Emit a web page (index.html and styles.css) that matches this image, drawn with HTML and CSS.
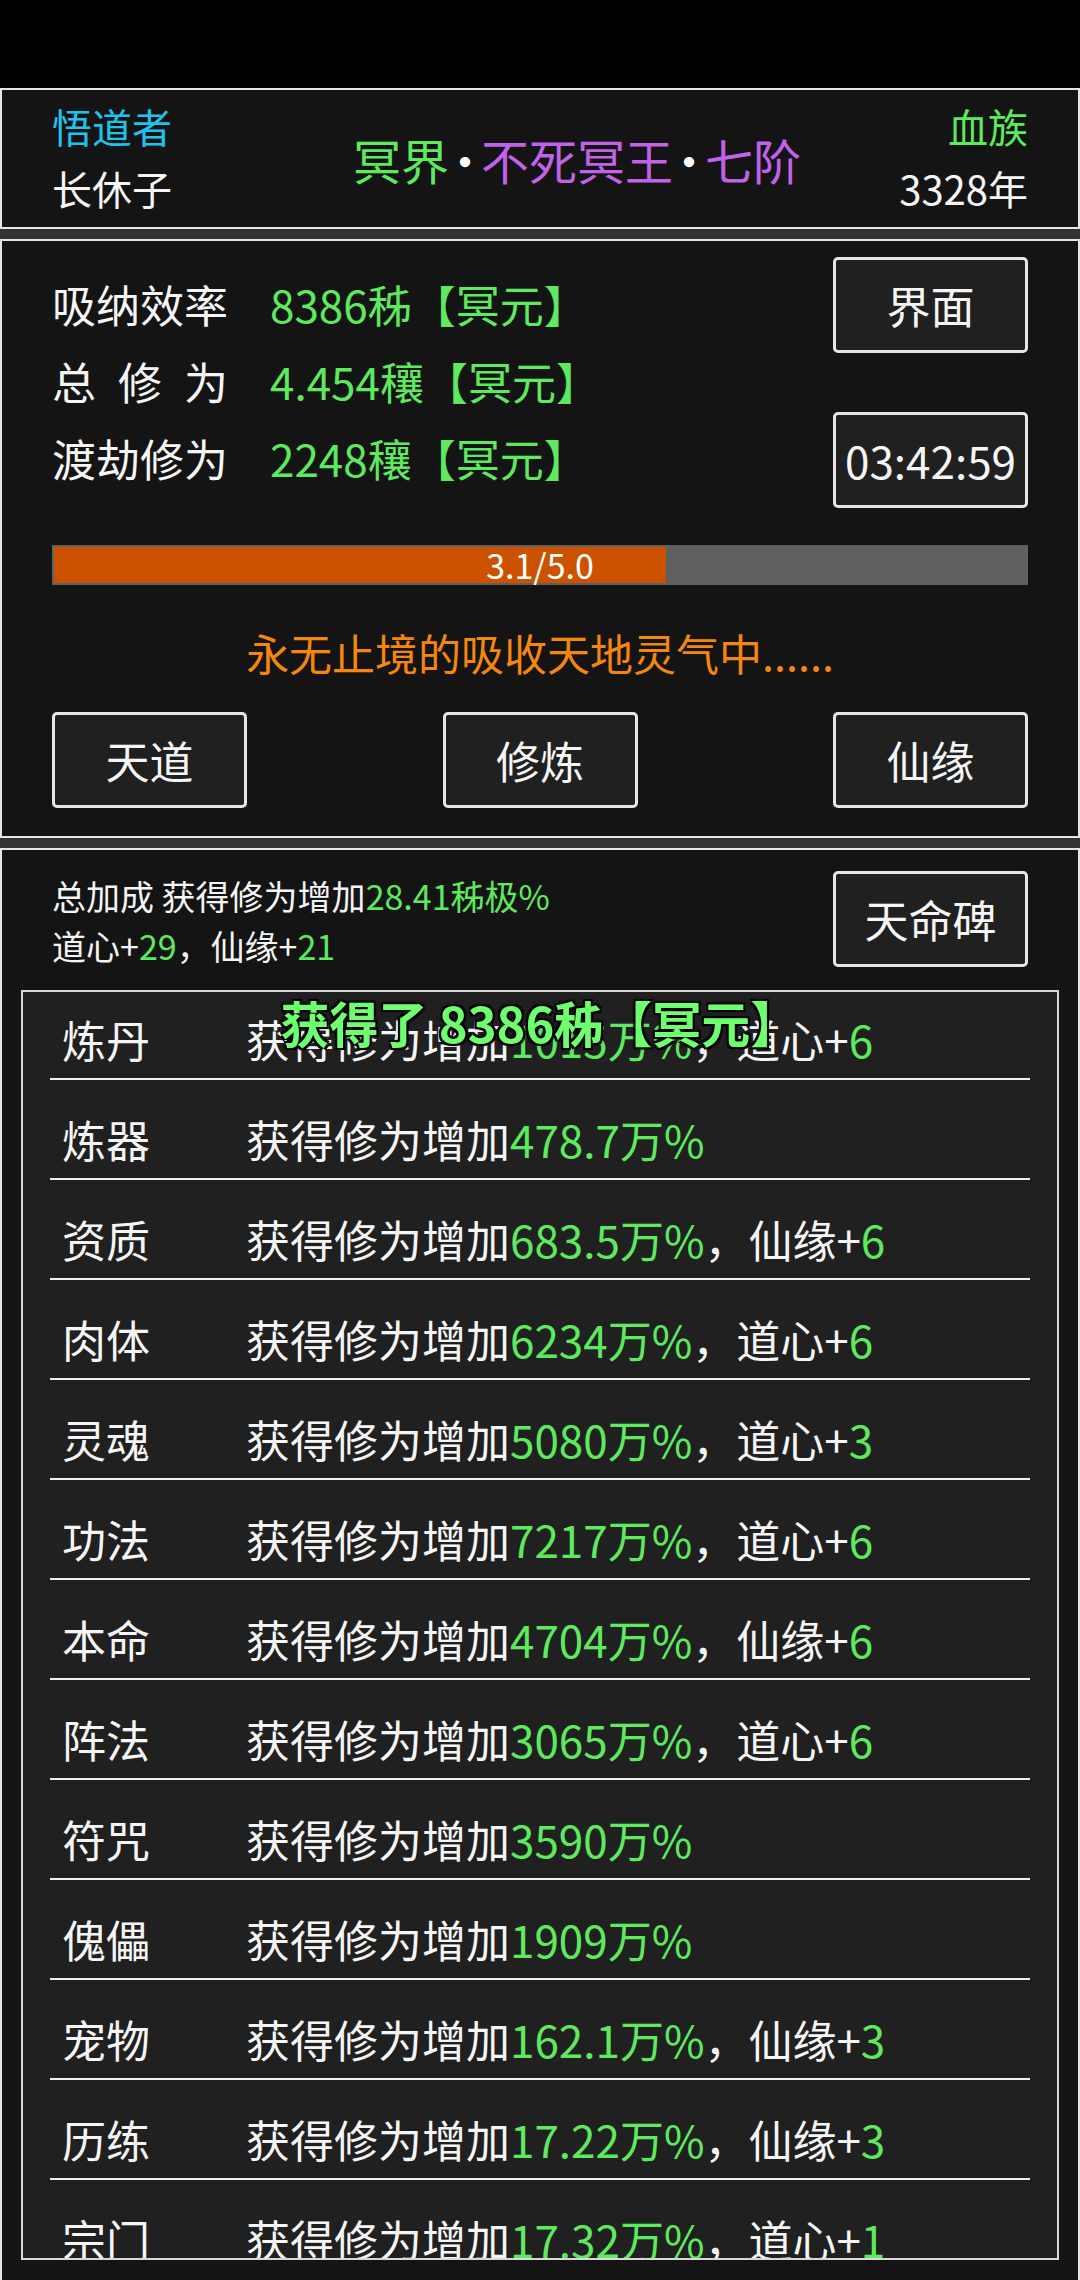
FILE: index.html
```html
<!DOCTYPE html>
<html lang="zh-CN">
<head>
  <meta charset="UTF-8" />
  <meta name="viewport" content="width=device-width, initial-scale=1.0"/>
  <title>修炼</title>
  <link rel="stylesheet" href="styles.css">
</head>
<body>
  <div class="status-bar"></div>

  <div class="screen">
    <!-- 角色信息 -->
    <div class="panel header">
      <div class="side">
        <div class="cyan">悟道者</div>
        <div>长休子</div>
      </div>
      <div class="title">
        <span class="green">冥界</span><span class="dot">·</span><span class="purple">不死冥王</span><span class="dot">·</span><span class="purple">七阶</span>
      </div>
      <div class="side right">
        <div class="green">血族</div>
        <div>3328年</div>
      </div>
    </div>

    <!-- 修炼 -->
    <div class="panel cultivate">
      <div class="top-row">
        <div class="stats">
          <div class="stat"><span class="label">吸纳效率</span><span class="green">8386秭【冥元】</span></div>
          <div class="stat"><span class="label">总修为</span><span class="green">4.454穰【冥元】</span></div>
          <div class="stat"><span class="label">渡劫修为</span><span class="green">2248穰【冥元】</span></div>
        </div>
        <div class="side-buttons">
          <div class="btn">界面</div>
          <div class="btn">03:42:59</div>
        </div>
      </div>

      <div class="bar">
        <div class="fill" style="width: 63%"></div>
        <span class="bar-text">3.1/5.0</span>
      </div>

      <p class="state">永无止境的吸收天地灵气中......</p>

      <div class="actions">
        <div class="btn">天道</div>
        <div class="btn">修炼</div>
        <div class="btn">仙缘</div>
      </div>
    </div>

    <!-- 加成 -->
    <div class="panel bonus">
      <div class="bonus-head">
        <div class="bonus-text">
          <div>总加成 获得修为增加<span class="green">28.41秭极%</span></div>
          <div>道心+<span class="green">29</span>，仙缘+<span class="green">21</span></div>
        </div>
        <div class="btn">天命碑</div>
      </div>

      <div class="list-box">
        <div class="list">
          <div class="row"><span class="name">炼丹</span><span>获得修为增加<span class="green">1015万%</span>，道心+<span class="green">6</span></span></div>
          <div class="row"><span class="name">炼器</span><span>获得修为增加<span class="green">478.7万%</span></span></div>
          <div class="row"><span class="name">资质</span><span>获得修为增加<span class="green">683.5万%</span>，仙缘+<span class="green">6</span></span></div>
          <div class="row"><span class="name">肉体</span><span>获得修为增加<span class="green">6234万%</span>，道心+<span class="green">6</span></span></div>
          <div class="row"><span class="name">灵魂</span><span>获得修为增加<span class="green">5080万%</span>，道心+<span class="green">3</span></span></div>
          <div class="row"><span class="name">功法</span><span>获得修为增加<span class="green">7217万%</span>，道心+<span class="green">6</span></span></div>
          <div class="row"><span class="name">本命</span><span>获得修为增加<span class="green">4704万%</span>，仙缘+<span class="green">6</span></span></div>
          <div class="row"><span class="name">阵法</span><span>获得修为增加<span class="green">3065万%</span>，道心+<span class="green">6</span></span></div>
          <div class="row"><span class="name">符咒</span><span>获得修为增加<span class="green">3590万%</span></span></div>
          <div class="row"><span class="name">傀儡</span><span>获得修为增加<span class="green">1909万%</span></span></div>
          <div class="row"><span class="name">宠物</span><span>获得修为增加<span class="green">162.1万%</span>，仙缘+<span class="green">3</span></span></div>
          <div class="row"><span class="name">历练</span><span>获得修为增加<span class="green">17.22万%</span>，仙缘+<span class="green">3</span></span></div>
          <div class="row"><span class="name">宗门</span><span>获得修为增加<span class="green">17.32万%</span>，道心+<span class="green">1</span></span></div>
        </div>
        <div class="toast">获得了 8386秭【冥元】</div>
      </div>
    </div>
  </div>
</body>
</html>
```

FILE: styles.css
```css
body {
  margin: 0;
  height: 2280px;
  overflow: hidden;
  background: #000;
  color: #f5f5f5;
  font-family: "Noto Sans CJK SC", sans-serif;
  display: flex;
  flex-direction: column;
}

.status-bar {
  height: 88px;
  flex-shrink: 0;
}

.screen {
  flex: 1;
  display: flex;
  flex-direction: column;
  gap: 10px;
  background: #333;
  min-height: 0;
}

.panel {
  background: #141414;
  border: 2px solid #e6e6e6;
  padding: 0 50px;
}

.green { color: #5eea5e; }
.cyan { color: #1ec4ee; }
.purple { color: #c062ea; }

/* header */
.header {
  height: 137px;
  display: flex;
  align-items: center;
}

.side {
  font-size: 40px;
  line-height: 62px;
  margin-top: -4px;
}

.side.right {
  margin-left: auto;
  text-align: right;
}

.title {
  margin-left: 181px;
  font-size: 48px;
  line-height: 62px;
  white-space: nowrap;
}

.dot {
  margin: 0 -8px;
  color: #fff;
}

/* cultivate */
.cultivate {
  padding-top: 16px;
  box-sizing: border-box;
  height: 599px;
}

.top-row {
  height: 251px;
  display: flex;
  align-items: center;
}

.stats {
  font-size: 44px;
  margin-top: -3px;
}

.stat {
  height: 77px;
  display: flex;
  align-items: center;
}

.label {
  width: 176px;
  margin-right: 42px;
  text-align-last: justify;
}

.side-buttons {
  margin-left: auto;
  height: 100%;
  display: flex;
  flex-direction: column;
  justify-content: space-between;
}

.btn {
  width: 195px;
  height: 96px;
  box-sizing: border-box;
  border: 3px solid #e6e6e6;
  border-radius: 5px;
  background: #202020;
  color: #f5f5f5;
  font-size: 44px;
  display: flex;
  justify-content: center;
  align-items: center;
}

.bar {
  position: relative;
  margin-top: 37px;
  height: 40px;
  padding: 2px;
  box-sizing: border-box;
  background: #606060;
}

.fill {
  height: 100%;
  background: #cc5200;
}

.bar-text {
  position: absolute;
  left: 0;
  right: 0;
  top: 0;
  text-align: center;
  font-size: 34px;
  line-height: 40px;
  color: #fff;
}

.state {
  margin: 37px 0 0;
  height: 60px;
  text-align: center;
  font-size: 43px;
  line-height: 60px;
  color: #f5870f;
}

.actions {
  margin-top: 30px;
  display: flex;
  justify-content: space-between;
}

/* bonus */
.bonus {
  flex: 1;
  min-height: 0;
  border-bottom: none;
  padding: 21px 0 20px;
  display: flex;
  flex-direction: column;
}

.bonus-head {
  height: 96px;
  padding: 0 50px;
  display: flex;
  margin-bottom: 23px;
}

.bonus-text {
  font-size: 34px;
  line-height: 50px;
}

.bonus-head .btn {
  margin-left: auto;
}

.list-box {
  position: relative;
  flex: 1;
  min-height: 0;
  margin: 0 19px;
  border: 2px solid #d8d8d8;
  background: #202020;
  overflow: hidden;
}

.list {
  margin-top: -12px;
  padding: 0 27px;
}

.row {
  height: 100px;
  box-sizing: border-box;
  border-bottom: 2px solid #f0f0f0;
  padding: 0 0 9px 12px;
  display: flex;
  align-items: flex-end;
  font-size: 44px;
  line-height: 60px;
}

.name {
  width: 184px;
}

.toast {
  position: absolute;
  left: 0;
  right: 0;
  top: 0;
  text-align: center;
  font-size: 49px;
  font-weight: bold;
  line-height: 60px;
  color: #6dff6d;
  text-shadow: 2px 2px 0 #000, -2px -2px 0 #000, 2px -2px 0 #000, -2px 2px 0 #000, 0 0 4px #000;
}
```
